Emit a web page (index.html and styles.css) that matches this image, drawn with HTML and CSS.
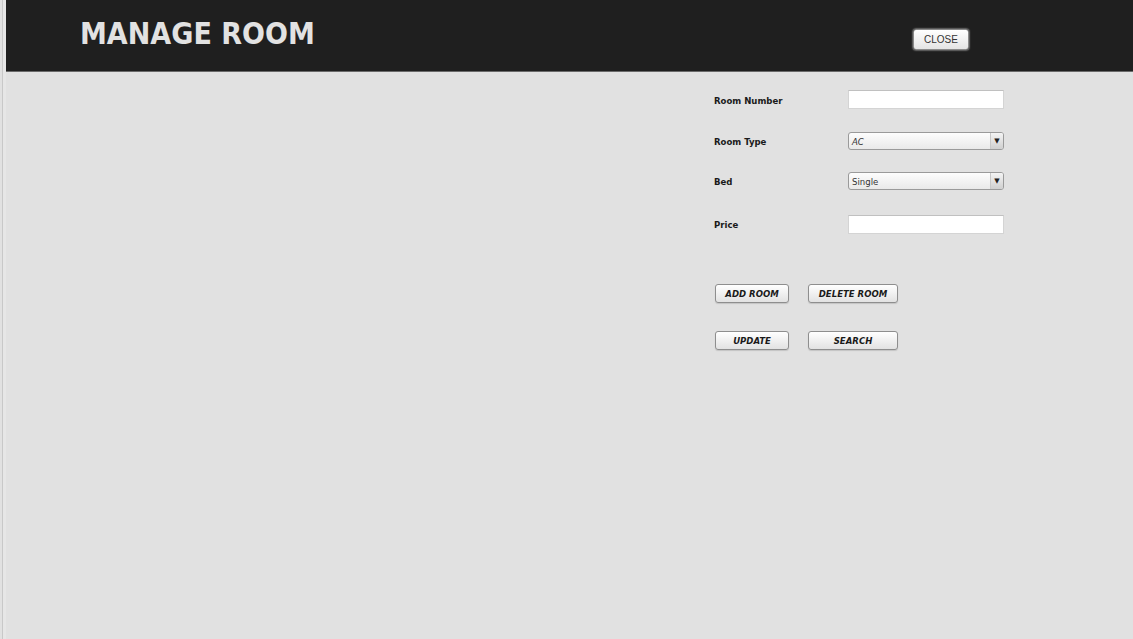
FILE: index.html
```html
<!DOCTYPE html>
<html>
<head>
<meta charset="utf-8">
<link rel="stylesheet" href="styles.css">
</head>
<body>
<div class="window">
  <div class="edge"></div>
  <div class="main">
    <header class="header">
      <h1 class="title">MANAGE ROOM</h1>
      <button class="close-btn">CLOSE</button>
    </header>
    <section class="content">
      <form class="form">
        <div class="row r1">
          <label class="label">Room Number</label>
          <input class="field" type="text">
        </div>
        <div class="row r2">
          <label class="label">Room Type</label>
          <div class="combo"><span class="combo-text italic">AC</span><span class="arrow">▼</span></div>
        </div>
        <div class="row r3">
          <label class="label">Bed</label>
          <div class="combo"><span class="combo-text">Single</span><span class="arrow">▼</span></div>
        </div>
        <div class="row r4">
          <label class="label">Price</label>
          <input class="field" type="text">
        </div>
        <div class="btn-row b1">
          <button type="button" class="btn small">ADD ROOM</button>
          <button type="button" class="btn wide">DELETE ROOM</button>
        </div>
        <div class="btn-row b2">
          <button type="button" class="btn small">UPDATE</button>
          <button type="button" class="btn wide">SEARCH</button>
        </div>
      </form>
    </section>
  </div>
</div>
</body>
</html>
```
FILE: styles.css
```css
html, body {
  margin: 0;
  padding: 0;
  width: 1133px;
  height: 639px;
  overflow: hidden;
  background: #e1e1e1;
  font-family: "DejaVu Sans", Verdana, sans-serif;
}
.window {
  display: flex;
  height: 639px;
}
.edge {
  width: 3px;
  margin-left: 2px;
  border-left: 1px solid #c8c8c8;
  background: #e6e6e6;
}
.main {
  flex: 1;
  display: flex;
  flex-direction: column;
}
.header {
  height: 71px;
  background: #1f1f1f;
  border-bottom: 1px solid #6a6a6a;
  display: flex;
  align-items: flex-start;
  padding-left: 74px;
}
.title {
  margin: 15px 0 0 0;
  font-family: "DejaVu Sans Condensed", "DejaVu Sans", sans-serif;
  font-stretch: condensed;
  font-weight: bold;
  font-size: 30px;
  color: #e2e2e2;
  line-height: 38px;
  width: 236px;
  white-space: nowrap;
}
.close-btn {
  margin: 29px 0 0 597px;
  width: 56px;
  height: 21px;
  padding: 0;
  border: 1px solid #8a8a8a;
  border-radius: 3px;
  background: linear-gradient(#ffffff, #e4e4e4);
  font-family: "Liberation Sans", Arial, sans-serif;
  font-size: 10px;
  color: #333;
  box-shadow: 0 0 2px #ffffff;
}
.content {
  flex: 1;
  padding-left: 708px;
}
.form {
  display: flex;
  flex-direction: column;
}
.row {
  display: flex;
  align-items: center;
  height: 19px;
}
.r1 { margin-top: 18px; }
.r2 { margin-top: 23px; height: 18px; }
.r3 { margin-top: 22px; height: 18px; }
.r4 { margin-top: 25px; }
.label {
  width: 134px;
  font-family: "DejaVu Sans Condensed", "DejaVu Sans", sans-serif;
  font-stretch: condensed;
  font-weight: bold;
  font-size: 9.5px;
  color: #1a1a1a;
}
.r1 .label { padding-top: 2px; }
.field {
  box-sizing: border-box;
  width: 156px;
  height: 19px;
  margin: 0;
  border: 1px solid #d4d4d4;
  border-top-color: #c0c0c0;
  background: #ffffff;
}
.combo {
  box-sizing: border-box;
  width: 156px;
  height: 18px;
  display: flex;
  align-items: center;
  border: 1px solid #9a9a9a;
  border-radius: 3px;
  background: linear-gradient(#fdfdfd, #e9e9e9);
}
.combo-text {
  flex: 1;
  padding-left: 3px;
  padding-top: 1px;
  font-family: "DejaVu Sans Condensed", "DejaVu Sans", sans-serif;
  font-stretch: condensed;
  font-size: 9.5px;
  color: #333;
}
.italic { font-style: italic; }
.arrow {
  box-sizing: border-box;
  width: 13px;
  height: 16px;
  display: flex;
  align-items: center;
  justify-content: center;
  font-size: 7px;
  color: #222;
  border-left: 1px solid #c8c8c8;
  background: linear-gradient(#f4f4f4, #cfcfcf);
  border-radius: 0 2px 2px 0;
}
.btn-row {
  display: flex;
  gap: 19px;
  padding-left: 1px;
}
.b1 { margin-top: 50px; }
.b2 { margin-top: 28px; }
.btn {
  height: 19px;
  padding: 0;
  border: 1px solid #8e8e8e;
  border-radius: 3px;
  background: linear-gradient(#ffffff, #e2e2e2);
  font-family: "DejaVu Sans Condensed", "DejaVu Sans", sans-serif;
  font-stretch: condensed;
  font-weight: bold;
  font-style: italic;
  font-size: 9.5px;
  color: #1a1a1a;
  box-shadow: 0 1px 1px #c4c4c4;
}
.small { width: 74px; }
.wide { width: 90px; }
```
